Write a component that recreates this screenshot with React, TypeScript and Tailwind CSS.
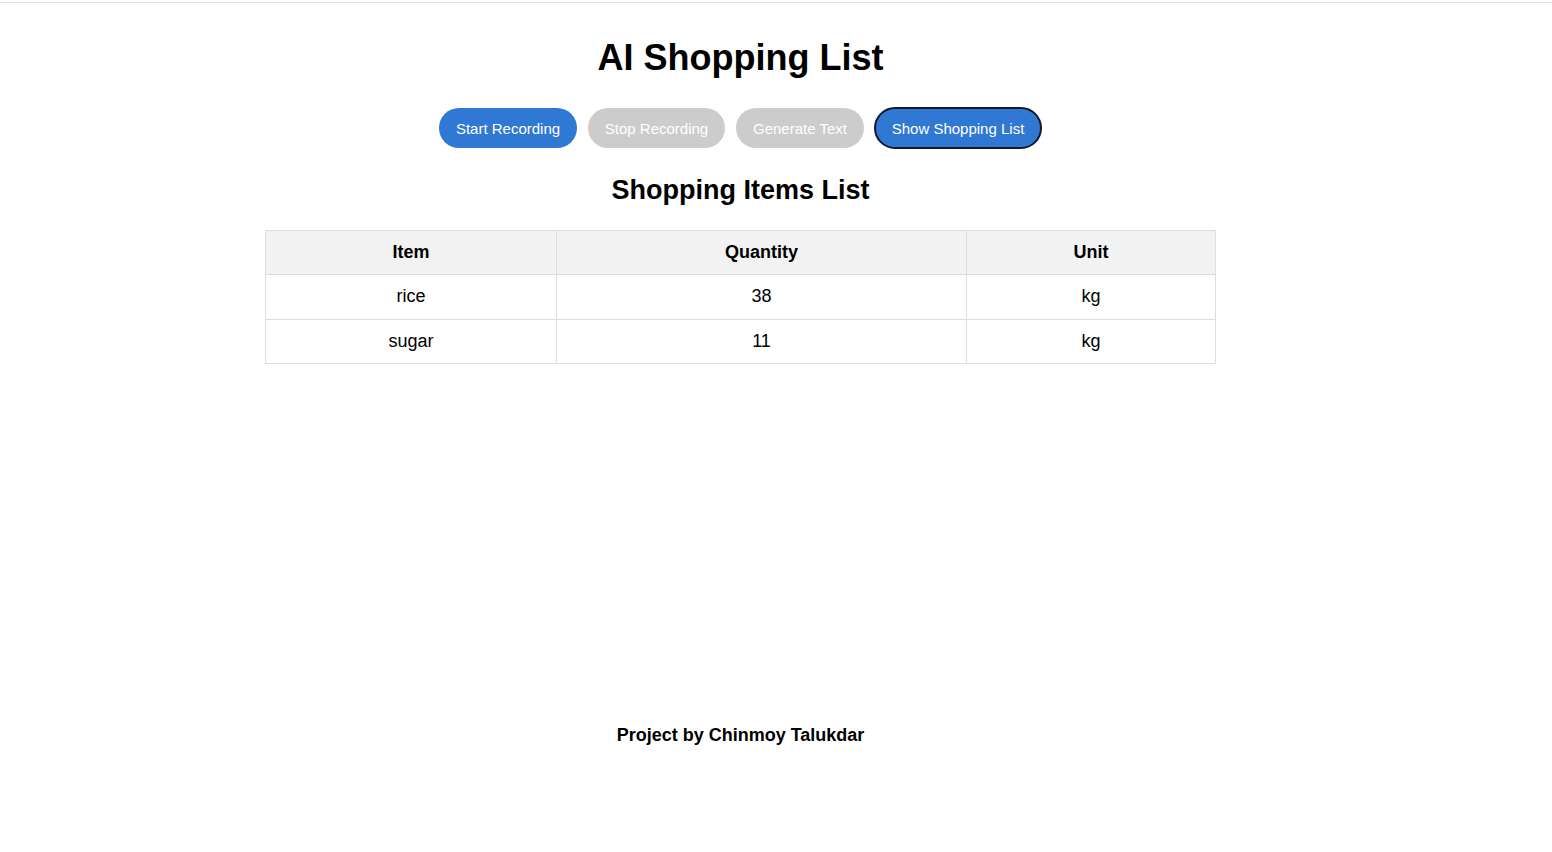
import React from "react";

const items = [
  { item: "rice", qty: "38", unit: "kg", h: "h-[45px]" },
  { item: "sugar", qty: "11", unit: "kg", h: "h-[44px]" },
];

export default function App() {
  return (
    <div className="min-h-[852px] bg-white text-black" style={{ fontFamily: '"Liberation Sans", Arial, sans-serif' }}>
      <div className="h-[3px] border-b border-[#e3e3e3]" />
      <div className="w-[1481px] flex flex-col items-center">
        <h1 className="mt-[34px] text-[36px] leading-[41px] font-bold">AI Shopping List</h1>
        <div className="mt-[30px] flex gap-[11px]">
          <button className="h-[40px] w-[138px] pt-[2px] rounded-full bg-[#2f78d3] text-white text-[15px]">Start Recording</button>
          <button className="h-[40px] w-[137px] pt-[2px] rounded-full bg-[#cccccc] text-white text-[15px]">Stop Recording</button>
          <button className="h-[40px] w-[128px] pt-[2px] rounded-full bg-[#cccccc] text-white text-[15px]">Generate Text</button>
          <button className="h-[42px] -mt-[1px] -ml-[1px] w-[168px] pt-[2px] rounded-full bg-[#2f78d3] text-white text-[15px] border-2 border-[#111827]">Show Shopping List</button>
        </div>
        <h2 className="mt-[26px] text-[27px] leading-[31px] font-bold">Shopping Items List</h2>
        <table className="mt-[24px] w-[951px] border-collapse text-[18px]">
          <thead>
            <tr className="bg-[#f2f2f2]">
              <th className="w-[291px] h-[44px] border border-[#dddddd] font-bold text-center">Item</th>
              <th className="w-[410px] h-[44px] border border-[#dddddd] font-bold text-center">Quantity</th>
              <th className="h-[44px] border border-[#dddddd] font-bold text-center">Unit</th>
            </tr>
          </thead>
          <tbody>
            {items.map((r) => (
              <tr key={r.item} className={r.h}>
                <td className="pb-[1px] border border-[#dddddd] text-center">{r.item}</td>
                <td className="pb-[1px] border border-[#dddddd] text-center">{r.qty}</td>
                <td className="pb-[1px] border border-[#dddddd] text-center">{r.unit}</td>
              </tr>
            ))}
          </tbody>
        </table>
        <p className="mt-[361px] text-[18px] leading-[21px] font-bold">Project by Chinmoy Talukdar</p>
      </div>
    </div>
  );
}
